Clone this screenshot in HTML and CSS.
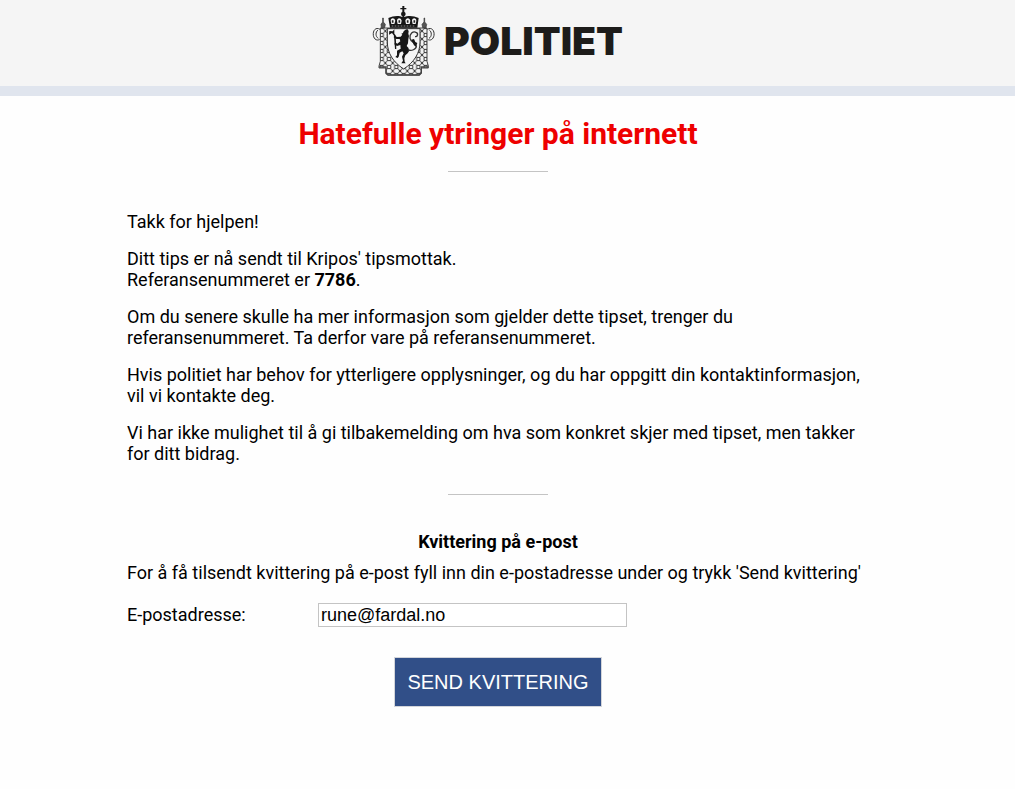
FILE: index.html
```html
<!DOCTYPE html>
<html lang="no">
<head>
<meta charset="utf-8">
<title>Hatefulle ytringer på internett</title>
<link rel="stylesheet" href="styles.css">
</head>
<body>
<header class="header">
  <svg class="crest" viewBox="0 0 240 240" aria-hidden="true">
    <defs>
      <pattern id="lattice" x="105" y="189" width="22" height="24" patternUnits="userSpaceOnUse">
        <path d="M0 0L22 24M22 0L0 24" stroke="#666" stroke-width="3"/>
        <circle cx="11" cy="12" r="5.5" fill="#f5f5f5" stroke="#333" stroke-width="3"/>
        <circle cx="0" cy="0" r="3" fill="#333"/>
        <circle cx="22" cy="0" r="3" fill="#333"/>
        <circle cx="0" cy="24" r="3" fill="#333"/>
        <circle cx="22" cy="24" r="3" fill="#333"/>
      </pattern>
    </defs>
    <path d="M45 88C32 80 23 92 25 106C27 119 37 123 44 118M39 90C31 96 31 110 40 115M187 88C200 80 209 92 207 106C205 119 195 123 188 118M193 90C201 96 201 110 192 115" fill="#f5f5f5" stroke="#333" stroke-width="3"/>
    <path d="M46 84H186V184L190 198V204H169V219L163 225H68L63 219V204H42V198L46 184Z" fill="url(#lattice)" stroke="#444" stroke-width="3"/>
    <path d="M43 201H63V220L69 225H163L169 219V201H189" fill="none" stroke="#444" stroke-width="4"/>
    <path d="M49 83L48 73L53 66V54H55V66L61 73L59 83ZM173 83L171 73L177 66V54H179V66L185 73L183 83Z" fill="#555" stroke="#333" stroke-width="2"/>
    <path d="M67 86H165V126C165 159 148 186 116 207C84 186 67 159 67 126Z" fill="#f5f5f5" stroke="#333" stroke-width="3"/>
    <g fill="#161616">
      <path d="M112 18H118V24H124V28H118V36H112V28H106V24H112Z"/>
      <circle cx="115" cy="42" r="7"/>
      <path d="M70 54C84 47 103 46 111 51L115 46L119 51C128 46 147 47 161 54L157 83H75Z"/>
      <path d="M115 95L120 90L127 87L131 93L130 101L132 108L130 118L129 130L125 138L130 143L133 152L128 160L121 166L118 175L119 185L122 190H109L114 182L111 170L116 160L112 154L104 158L101 170L98 174L91 171L96 166V152L107 146L106 135L96 138L88 133L90 127L97 131L106 124L104 117L94 117L86 112L88 106L96 111L107 110L112 104L109 101L114 99Z"/>
      <path d="M73 93L83 94L88 88L88 101L92 106L94 147L90 147L87 107L81 99L72 104Z"/>
    </g>
    <path d="M77 63C76 52 89 52 91 62L88 72H79ZM96 63C96 52 108 52 110 62L108 72H98ZM121 62C122 52 135 52 136 62L134 72H123ZM141 62C142 52 155 53 154 63L152 72H143Z" fill="#f5f5f5"/>
    <path d="M83 61V68M103 61V68M128 61V68M148 61V68" stroke="#222" stroke-width="5"/>
    <path d="M80 78H151" stroke="#888" stroke-width="3" stroke-dasharray="5 4"/>
    <path d="M129 149C139 155 154 147 154 139C154 128 137 127 135 115C133 101 144 93 153 97C161 100 158 111 150 110" fill="none" stroke="#333" stroke-width="4"/>
    <path d="M139 119L147 117L151 126L157 129L153 140L147 136Z" fill="#161616"/>
  </svg>
  <svg class="wordmark" viewBox="0 0 190 50" role="img" aria-label="POLITIET">
    <text class="wordmark-text" x="-1" y="39" textLength="179" lengthAdjust="spacingAndGlyphs">POLITIET</text>
  </svg>
</header>
<main class="content">
  <h1 class="title">Hatefulle ytringer på internett</h1>
  <hr class="rule">
  <section class="message">
    <p>Takk for hjelpen!</p>
    <p>Ditt tips er nå sendt til Kripos' tipsmottak.<br>Referansenummeret er <b>7786</b>.</p>
    <p>Om du senere skulle ha mer informasjon som gjelder dette tipset, trenger du<br>referansenummeret. Ta derfor vare på referansenummeret.</p>
    <p>Hvis politiet har behov for ytterligere opplysninger, og du har oppgitt din kontaktinformasjon,<br>vil vi kontakte deg.</p>
    <p>Vi har ikke mulighet til å gi tilbakemelding om hva som konkret skjer med tipset, men takker<br>for ditt bidrag.</p>
  </section>
  <hr class="rule">
  <form class="receipt">
    <h2 class="subtitle">Kvittering på e-post</h2>
    <p class="hint">For å få tilsendt kvittering på e-post fyll inn din e-postadresse under og trykk 'Send kvittering'</p>
    <div class="field">
      <label class="label" for="email">E-postadresse:</label>
      <input class="input" id="email" type="text" value="rune@fardal.no">
    </div>
    <button class="button" type="button">SEND KVITTERING</button>
  </form>
</main>
</body>
</html>
```
FILE: styles.css
```css
* { box-sizing: border-box; }
body {
  margin: 0;
  min-height: 789px;
  background: #fefefe;
  color: #000;
  font: 18px/21px Roboto, sans-serif;
}
.header {
  display: flex;
  height: 96px;
  padding-left: 365px;
  background: #f5f5f5;
  border-bottom: 10px solid #e0e5ee;
}
.crest { width: 80px; height: 80px; }
.wordmark { width: 190px; height: 50px; margin-top: 16px; overflow: visible; }
.wordmark-text {
  font: 900 38px Inter, sans-serif;
  fill: #1d1c1a;
}
.content {
  width: 742px;
  margin-left: 127px;
  padding-top: 20px;
}
.title {
  margin: 0;
  font-size: 30px;
  line-height: 35px;
  text-align: center;
  color: #ee0000;
}
.rule {
  width: 100px;
  height: 1px;
  margin: 20px auto 0;
  border: 0;
  background: #c4c4c4;
}
.message { padding-top: 39px; white-space: nowrap; }
.message p { margin: 0 0 16px; }
.message p:last-child { margin-bottom: 30px; }
.receipt { padding-top: 36px; }
.subtitle {
  margin: 0;
  font-size: 18px;
  line-height: 21px;
  text-align: center;
}
.hint { margin: 10px 0 20px; white-space: nowrap; }
.field { display: flex; align-items: flex-start; height: 24px; }
.label { width: 191px; padding-top: 1px; }
.input {
  width: 309px;
  height: 24px;
  padding: 1px 2px;
  border: 1px solid #c4c4c4;
  background: #fff;
  color: #000;
  font: 18px "Liberation Sans", sans-serif;
}
.button {
  display: block;
  width: 208px;
  height: 50px;
  margin: 30px auto 0;
  padding: 0;
  border: 1px solid #d3d5da;
  background: #314f88;
  color: #fff;
  font: 20px "Liberation Sans", sans-serif;
}
```
